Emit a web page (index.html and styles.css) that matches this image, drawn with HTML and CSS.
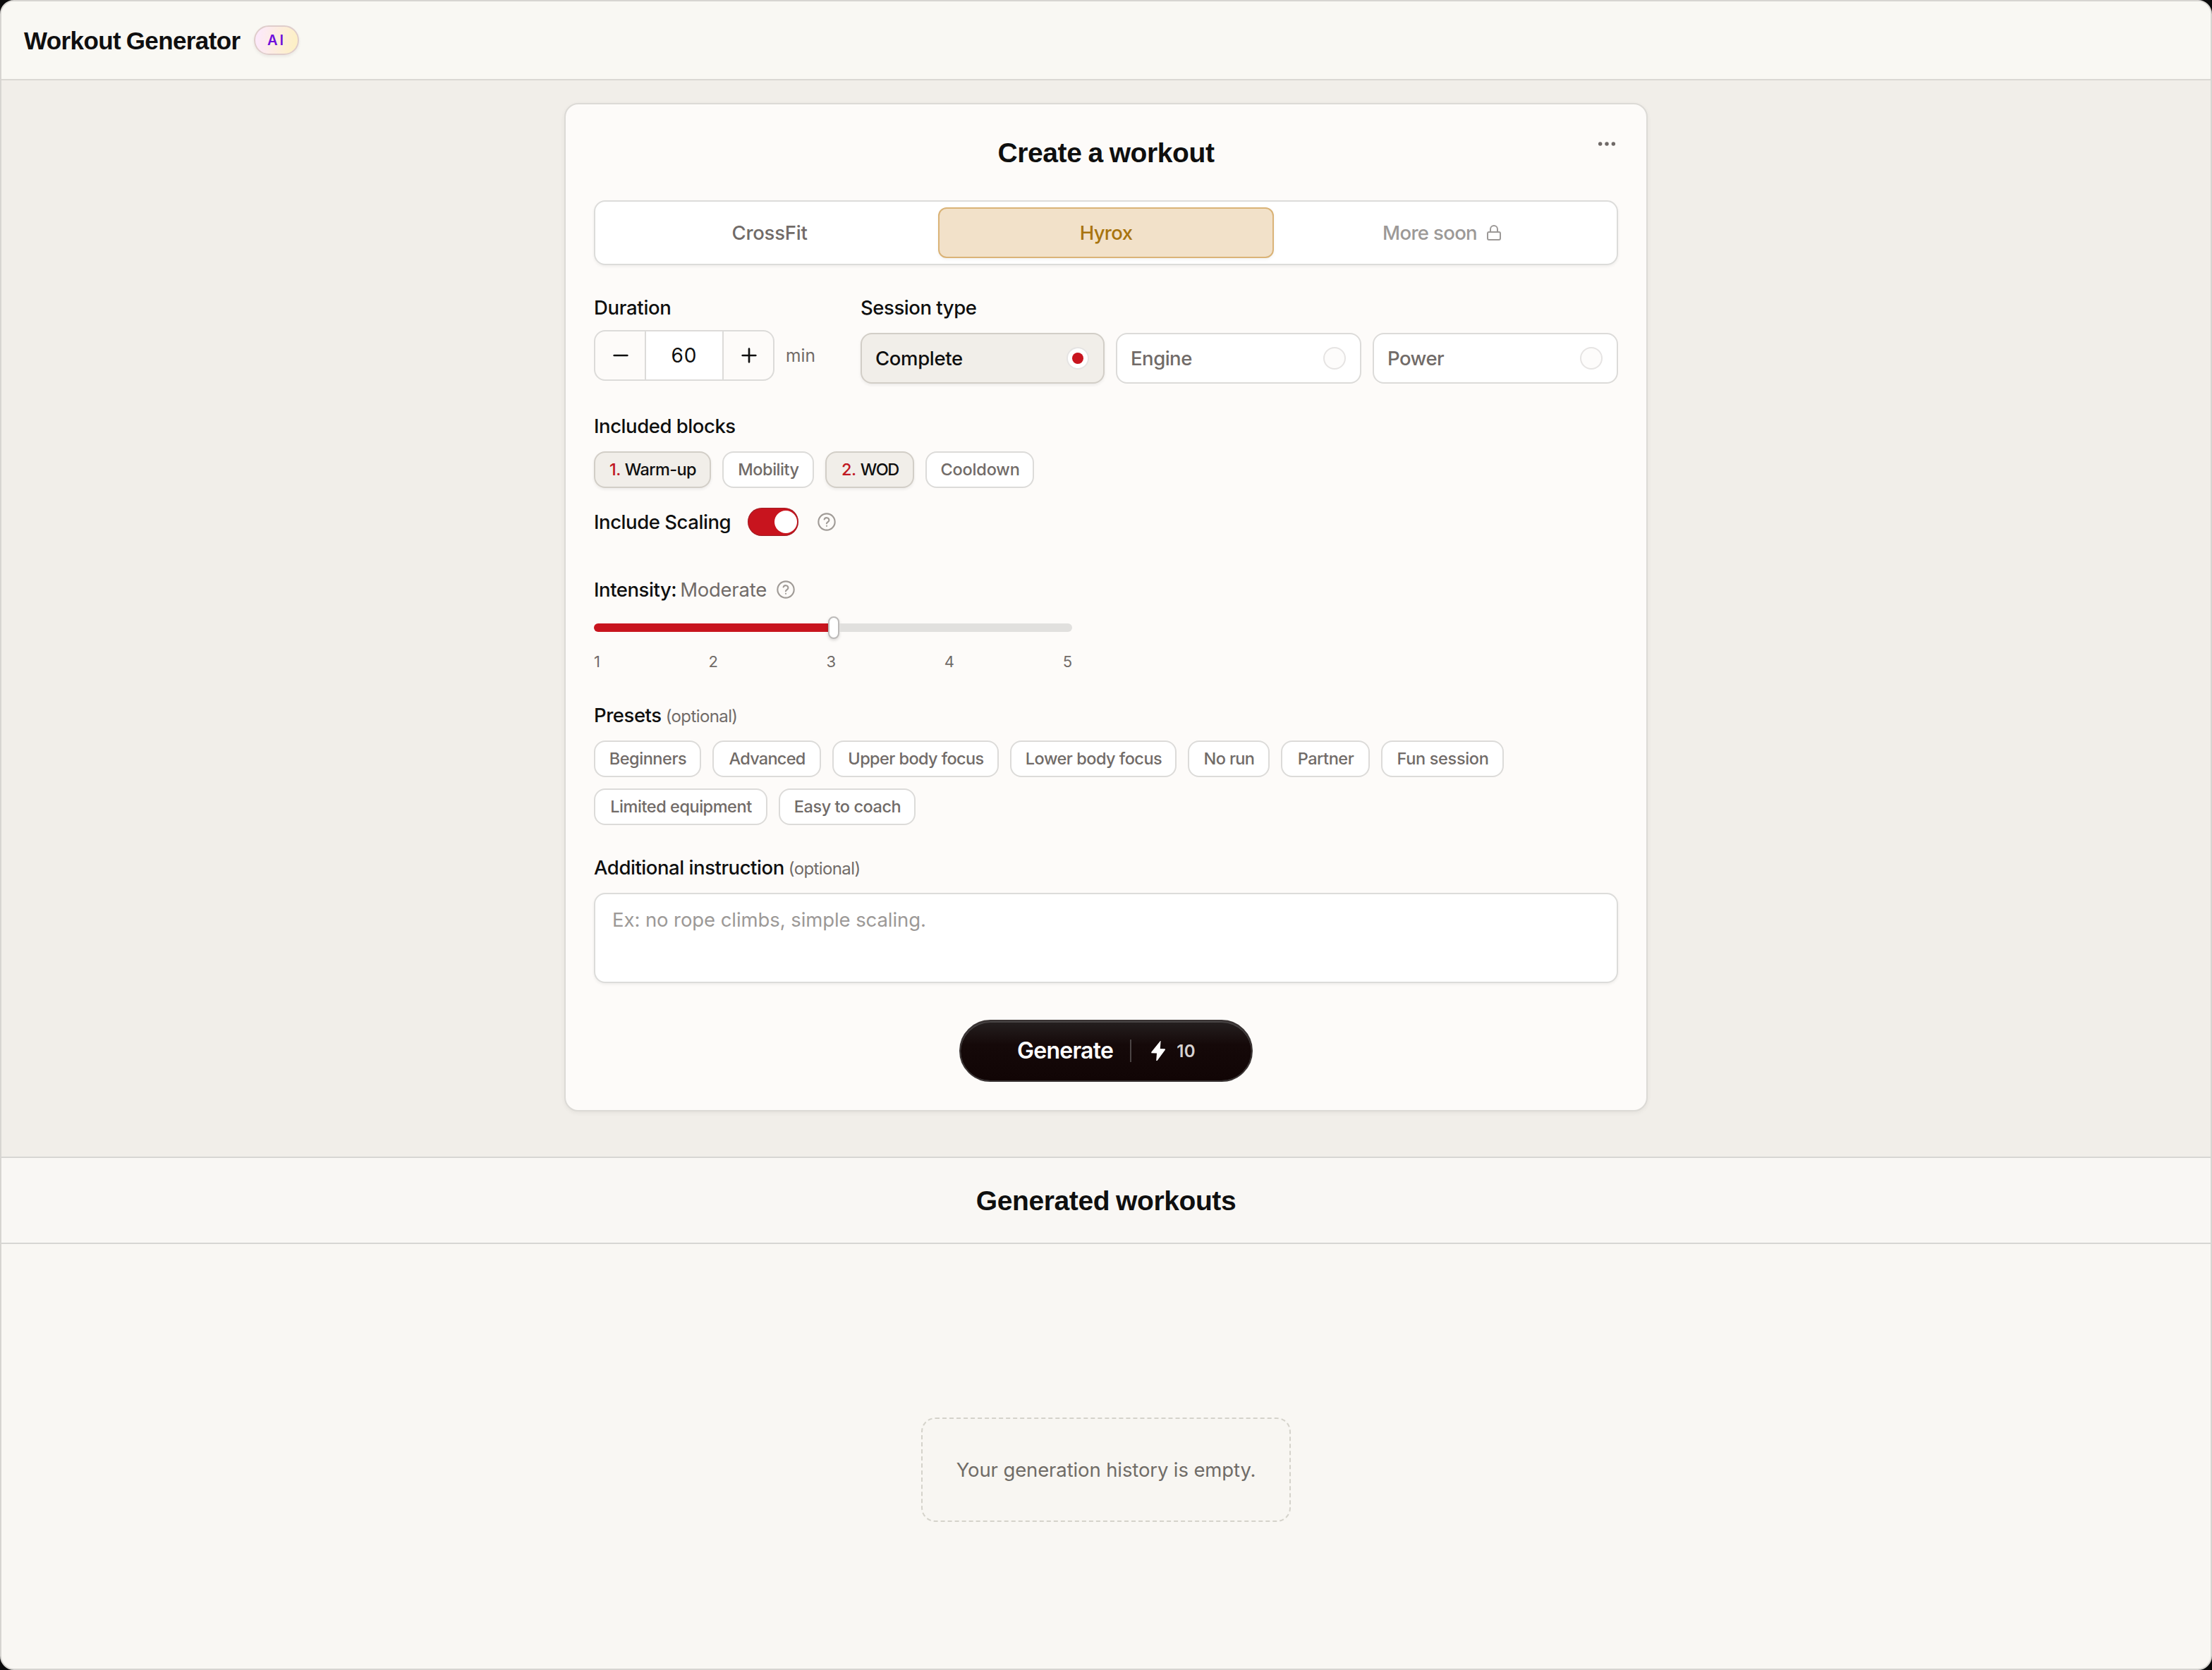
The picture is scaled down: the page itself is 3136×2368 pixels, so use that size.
FILE: index.html
```html
<!DOCTYPE html>
<html lang="en">
<head>
<meta charset="utf-8">
<title>Workout Generator</title>
<link rel="stylesheet" href="styles.css">
</head>
<body>
<div class="window">
  <header class="topbar">
    <h1 class="topbar-title">Workout Generator</h1>
    <span class="ai-badge">AI</span>
  </header>

  <main class="stage">
    <section class="card">
      <div class="card-head">
        <h2 class="heading card-title">Create a workout</h2>
        <button class="menu" aria-label="More options">
          <svg viewBox="0 0 24 24" width="32" height="32" fill="currentColor"><circle cx="5" cy="12" r="2.05"/><circle cx="12" cy="12" r="2.05"/><circle cx="19" cy="12" r="2.05"/></svg>
        </button>
      </div>

      <div class="tabs">
        <button class="tab tab-crossfit">CrossFit</button>
        <button class="tab tab-active">Hyrox</button>
        <button class="tab tab-locked">More soon
          <svg class="lock" viewBox="0 0 24 24" width="24" height="24"><rect x="3" y="11" width="18" height="11" rx="2"/><path d="M7 11V7a5 5 0 0 1 10 0v4"/></svg>
        </button>
      </div>

      <div class="basics">
        <div class="field field-duration">
          <div class="label label-duration">Duration</div>
          <div class="duration">
            <div class="stepper">
              <button class="step" aria-label="Less"><svg class="step-icon" viewBox="0 0 24 24"><path d="M5 12h14"/></svg></button>
              <div class="step-value">60</div>
              <button class="step" aria-label="More"><svg class="step-icon" viewBox="0 0 24 24"><path d="M5 12h14M12 5v14"/></svg></button>
            </div>
            <span class="unit">min</span>
          </div>
        </div>
        <div class="field field-session">
          <div class="label">Session type</div>
          <div class="options">
            <button class="option option-selected">Complete<span class="radio"></span></button>
            <button class="option">Engine<span class="radio"></span></button>
            <button class="option">Power<span class="radio"></span></button>
          </div>
        </div>
      </div>

      <div class="field blocks">
        <div class="label">Included blocks</div>
        <div class="chips">
          <button class="chip chip-selected chip-warmup"><span class="order">1.</span>Warm-up</button>
          <button class="chip chip-mobility">Mobility</button>
          <button class="chip chip-selected chip-wod"><span class="order">2.</span><span class="tight">WOD</span></button>
          <button class="chip chip-cooldown">Cooldown</button>
        </div>
      </div>

      <div class="scaling">
        <div class="label">Include Scaling</div>
        <span class="toggle"><span class="knob"></span></span>
        <svg class="help help-scaling" viewBox="0 0 24 24"><circle cx="12" cy="12" r="10"/><path d="M9.09 9a3 3 0 0 1 5.83 1c0 2-3 2.6-3 4"/><path d="M12 17h.01"/></svg>
      </div>

      <div class="intensity">
        <div class="label-row">
          <div class="label label-intensity">Intensity:</div>
          <span class="level">Moderate</span>
          <svg class="help help-intensity" viewBox="0 0 24 24"><circle cx="12" cy="12" r="10"/><path d="M9.09 9a3 3 0 0 1 5.83 1c0 2-3 2.6-3 4"/><path d="M12 17h.01"/></svg>
        </div>
        <div class="slider">
          <span class="fill"></span><span class="thumb"></span><span class="rest"></span>
        </div>
        <div class="ticks"><span>1</span><span>2</span><span>3</span><span>4</span><span>5</span></div>
      </div>

      <div class="field presets">
        <div class="label-line"><div class="label">Presets</div><span class="optional">(optional)</span></div>
        <div class="chips">
          <button class="chip chip-beginners">Beginners</button>
          <button class="chip chip-advanced">Advanced</button>
          <button class="chip chip-upper">Upper body focus</button>
          <button class="chip chip-lower">Lower body focus</button>
          <button class="chip chip-norun">No run</button>
          <button class="chip chip-partner">Partner</button>
          <button class="chip chip-fun">Fun session</button>
          <button class="chip chip-limited">Limited equipment</button>
          <button class="chip chip-easy">Easy to coach</button>
        </div>
      </div>

      <div class="field instruction">
        <div class="label-line"><div class="label">Additional instruction</div><span class="optional">(optional)</span></div>
        <div class="textarea">Ex: no rope climbs, simple scaling.</div>
      </div>

      <button class="generate">
        <span class="generate-label">Generate</span>
        <span class="divider"></span>
        <svg class="bolt" viewBox="0 0 20 28" width="20" height="28"><path d="M13 0 .3 15.8V17.2L8 17.5 7.2 28H8.6L20 12.4 19.7 11.2 12.8 11 13.6 0Z"/></svg>
        <span class="cost">10</span>
      </button>
    </section>
  </main>

  <div class="history-head"><h2 class="heading history-title">Generated workouts</h2></div>
  <section class="history">
    <div class="empty">Your generation history is empty.</div>
  </section>
</div>
</body>
</html>
```
FILE: styles.css
```css
* { box-sizing: border-box; }

body {
  margin: 0;
  background: #0b0b0b;
  font-family: Inter, "Liberation Sans", sans-serif;
  font-size: 27.5px;
  color: #0f0f0f;
}

button {
  margin: 0;
  padding: 0;
  border: 0;
  background: none;
  font: inherit;
  color: inherit;
}

svg { display: block; }

.window {
  display: flex;
  flex-direction: column;
  width: 3136px;
  height: 2368px;
  overflow: hidden;
  border: 2px solid #d7d5d1;
  border-radius: 20px;
  background: #f9f7f3;
}

/* Top bar */
.topbar {
  display: flex;
  align-items: center;
  height: 112px;
  flex: none;
  padding-left: 32px;
  border-bottom: 2px solid #dad8d3;
  background: #f9f8f3;
}

.topbar-title {
  width: 326px;
  margin: 2px 0 0;
  font: bold 35px/44px "Liberation Sans", Arial, sans-serif;
  letter-spacing: -0.6px;
  word-spacing: -1.5px;
  white-space: nowrap;
}

.ai-badge {
  width: 64px;
  height: 42px;
  padding-left: 17px;
  border: 2px solid #dfcdcb;
  border-radius: 21px;
  background: linear-gradient(100deg, #fce9f9 10%, #fdf0c6 90%);
  box-shadow: 0 2px 4px rgba(0, 0, 0, 0.07);
  font-weight: 600;
  font-size: 20px;
  line-height: 39px;
  letter-spacing: 3px;
  color: #6f0fdb;
}

/* Form card */
.stage {
  display: flex;
  justify-content: center;
  align-items: flex-start;
  flex: none;
  height: 1526px;
  padding-top: 32px;
  background: #f1eee9;
}

.card {
  display: flex;
  flex-direction: column;
  width: 1536px;
  height: 1430px;
  padding: 40px;
  border: 2px solid #dcdad6;
  border-radius: 20px;
  background: #fdfbf9;
  box-shadow: 0 2px 6px rgba(0, 0, 0, 0.06);
}

.card-head {
  display: grid;
  grid-template-columns: 1fr auto 1fr;
  height: 56px;
}

.heading {
  margin: 0;
  font: bold 39px/58px "Liberation Sans", Arial, sans-serif;
  letter-spacing: -0.4px;
  word-spacing: -1.5px;
  white-space: nowrap;
}

.card-title { grid-column: 2; }

.menu {
  justify-self: end;
  align-self: start;
  color: #6f6967;
}

.tabs {
  display: grid;
  grid-template-columns: 478px 476px 478px;
  height: 92px;
  margin-top: 40px;
  padding: 8px;
  border: 2px solid #dcdcda;
  border-radius: 16px;
  background: #fff;
  box-shadow: 0 2px 4px rgba(0, 0, 0, 0.06);
}

.tab {
  display: flex;
  align-items: center;
  justify-content: center;
  gap: 12px;
  font-weight: 500;
  letter-spacing: -0.65px;
  color: #716b68;
}

.tab-crossfit { letter-spacing: -0.24px; }

.tab-active {
  border: 2px solid #dab377;
  border-radius: 12px;
  background: #f2e1c9;
  box-shadow: 0 2px 4px rgba(0, 0, 0, 0.05);
  color: #a8740e;
}

.tab-locked { color: #9c9997; }

.lock {
  fill: none;
  stroke: currentColor;
  stroke-width: 2;
  stroke-linecap: round;
  stroke-linejoin: round;
}

.label {
  font-weight: 500;
  line-height: 40px;
  letter-spacing: -0.45px;
  white-space: nowrap;
}

.label-duration { letter-spacing: -0.3px; }

.basics {
  display: grid;
  grid-template-columns: 346px 1fr;
  column-gap: 32px;
  height: 128px;
  margin-top: 40px;
}

.field {
  display: flex;
  flex-direction: column;
  gap: 16px;
}

.field-duration { gap: 12px; }

.duration {
  display: flex;
  align-items: center;
  gap: 16px;
}

.stepper {
  display: flex;
  width: 256px;
  height: 72px;
  overflow: hidden;
  border: 2px solid #dcdbd9;
  border-radius: 16px;
}

.step {
  display: flex;
  align-items: center;
  justify-content: center;
  width: 70px;
  padding-left: 2px;
}

.step-icon {
  width: 32px;
  height: 32px;
  fill: none;
  stroke: #0f0f0f;
  stroke-width: 2;
  stroke-linecap: round;
}

.step-value {
  flex: 1;
  border: solid #dcdbd9;
  border-width: 0 2px;
  background: #fff;
  font-size: 28px;
  line-height: 68px;
  letter-spacing: 1px;
  text-align: center;
}

.unit {
  font-size: 24.5px;
  color: #716b68;
}

.options {
  display: grid;
  grid-template-columns: 346px 348px 348px;
  gap: 16px;
}

.option {
  display: flex;
  align-items: center;
  justify-content: space-between;
  height: 72px;
  padding: 0 20px 0 19px;
  border: 2px solid #dcdbd9;
  border-radius: 16px;
  background: #fff;
  font-weight: 500;
  letter-spacing: -0.5px;
  color: #716b68;
}

.option-selected {
  border-color: #d2cec7;
  background: #f1eee9;
  box-shadow: 0 2px 4px rgba(0, 0, 0, 0.07);
  letter-spacing: -0.35px;
  color: #0f0f0f;
}

.radio {
  display: grid;
  place-items: center;
  width: 32px;
  height: 32px;
  border: 2px solid #e6e4e3;
  border-radius: 50%;
  background: #fdfcfb;
}

.option-selected .radio { background: #fff; }

.option-selected .radio::before {
  content: "";
  width: 16px;
  height: 16px;
  border-radius: 50%;
  background: #c8141e;
}

/* Chips */
.blocks,
.presets,
.instruction { margin-top: 40px; }

.chips {
  display: flex;
  flex-wrap: wrap;
  gap: 16px;
}

.chip {
  display: flex;
  align-items: center;
  justify-content: center;
  height: 52px;
  padding: 0 0 1px 1px;
  border: 2px solid #dcdbd9;
  border-radius: 16px;
  background: #fff;
  font-weight: 500;
  font-size: 23.5px;
  letter-spacing: -0.45px;
  white-space: nowrap;
  color: #716b68;
}

.chip-selected {
  gap: 6px;
  border-color: #d2cec7;
  background: #f1eee9;
  box-shadow: 0 2px 4px rgba(0, 0, 0, 0.07);
  color: #0f0f0f;
}

.order { color: #c01822; }
.tight { letter-spacing: -1.4px; }

.chip-warmup { width: 166px; letter-spacing: -0.6px; }
.chip-mobility { width: 130px; }
.chip-wod { width: 126px; }
.chip-cooldown { width: 154px; letter-spacing: -0.16px; }
.chip-beginners { width: 152px; }
.chip-advanced { width: 154px; letter-spacing: -0.73px; }
.chip-upper { width: 236px; letter-spacing: -0.58px; }
.chip-lower { width: 236px; letter-spacing: -0.5px; }
.chip-norun { width: 116px; letter-spacing: -0.64px; }
.chip-partner { width: 126px; }
.chip-fun { width: 174px; letter-spacing: -0.32px; }
.chip-limited { width: 246px; }
.chip-easy { width: 194px; }

/* Scaling */
.scaling {
  display: flex;
  align-items: center;
  gap: 24px;
  height: 40px;
  margin-top: 28px;
}

.toggle {
  display: flex;
  justify-content: flex-end;
  align-items: center;
  width: 72px;
  height: 40px;
  padding-right: 2px;
  border-radius: 20px;
  background: #c8141e;
  box-shadow: inset 0 0 0 1px rgba(90, 50, 50, 0.35);
}

.knob {
  width: 32px;
  height: 32px;
  border-radius: 50%;
  background: #fff;
}

.help {
  width: 28px;
  height: 28px;
  fill: none;
  stroke: #a09b97;
  stroke-width: 1.8;
  stroke-linecap: round;
  stroke-linejoin: round;
}

.help-scaling { margin-left: 2px; }
.help-intensity { margin-left: 8px; }

/* Intensity */
.intensity { margin-top: 56px; }

.label-row {
  display: flex;
  align-items: center;
  gap: 5px;
  height: 40px;
}

.level {
  letter-spacing: -0.25px;
  color: #716b68;
}

.slider {
  display: flex;
  align-items: center;
  width: 678px;
  height: 32px;
  margin-top: 18px;
}

.fill {
  width: 332px;
  height: 12px;
  border-radius: 6px 0 0 6px;
  background: #c8141e;
}

.thumb {
  width: 16px;
  height: 32px;
  border: 2px solid #bcbab9;
  border-radius: 8px;
  background: #fff;
  box-shadow: 0 2px 4px rgba(0, 0, 0, 0.15);
}

.rest {
  flex: 1;
  height: 12px;
  border-radius: 0 6px 6px 0;
  background: #e1e0de;
}

.ticks {
  display: flex;
  justify-content: space-between;
  width: 678px;
  margin-top: 16px;
  font-size: 22px;
  line-height: 32px;
  color: #716b68;
}

.label-line {
  display: flex;
  align-items: baseline;
  gap: 6px;
  height: 40px;
}

.optional {
  font-size: 24px;
  letter-spacing: -0.6px;
  color: #716b68;
}

.textarea {
  height: 128px;
  padding: 16px 24px;
  border: 2px solid #dcdcda;
  border-radius: 16px;
  background: #fff;
  box-shadow: 0 2px 4px rgba(0, 0, 0, 0.06);
  line-height: 40px;
  letter-spacing: -0.08px;
  color: #9c9997;
}

/* Generate button */
.generate {
  display: flex;
  align-items: center;
  align-self: center;
  width: 416px;
  height: 88px;
  margin-top: 52px;
  padding-left: 80px;
  border: 2px solid #3a3434;
  border-radius: 44px;
  background: linear-gradient(#252020, #150909 40%, #110505) padding-box, #3a3434;
  box-shadow: inset 0 2px 0 #474343;
}

.generate-label {
  padding-bottom: 2px;
  font-weight: 600;
  font-size: 32px;
  letter-spacing: -0.74px;
  color: #fff;
}

.divider {
  width: 2px;
  height: 32px;
  margin: 0 28px 0 24px;
  background: #4b4444;
}

.bolt { fill: #fff; }

.cost {
  margin-left: 16px;
  font-weight: 600;
  font-size: 24px;
  letter-spacing: 0.4px;
  color: #d6d2d2;
}

/* History */
.history-head {
  flex: none;
  height: 124px;
  padding-top: 32px;
  border: solid #d7d6d3;
  border-width: 2px 0;
  background: #f9f7f4;
  text-align: center;
}

.history {
  display: flex;
  justify-content: center;
  align-items: flex-start;
  flex: 1;
  padding-top: 246px;
}

.empty {
  width: 524px;
  height: 148px;
  border: 2px dashed #d5d3cb;
  border-radius: 20px;
  background: #f8f6f2;
  line-height: 144px;
  letter-spacing: -0.12px;
  text-align: center;
  color: #706c67;
}
```
